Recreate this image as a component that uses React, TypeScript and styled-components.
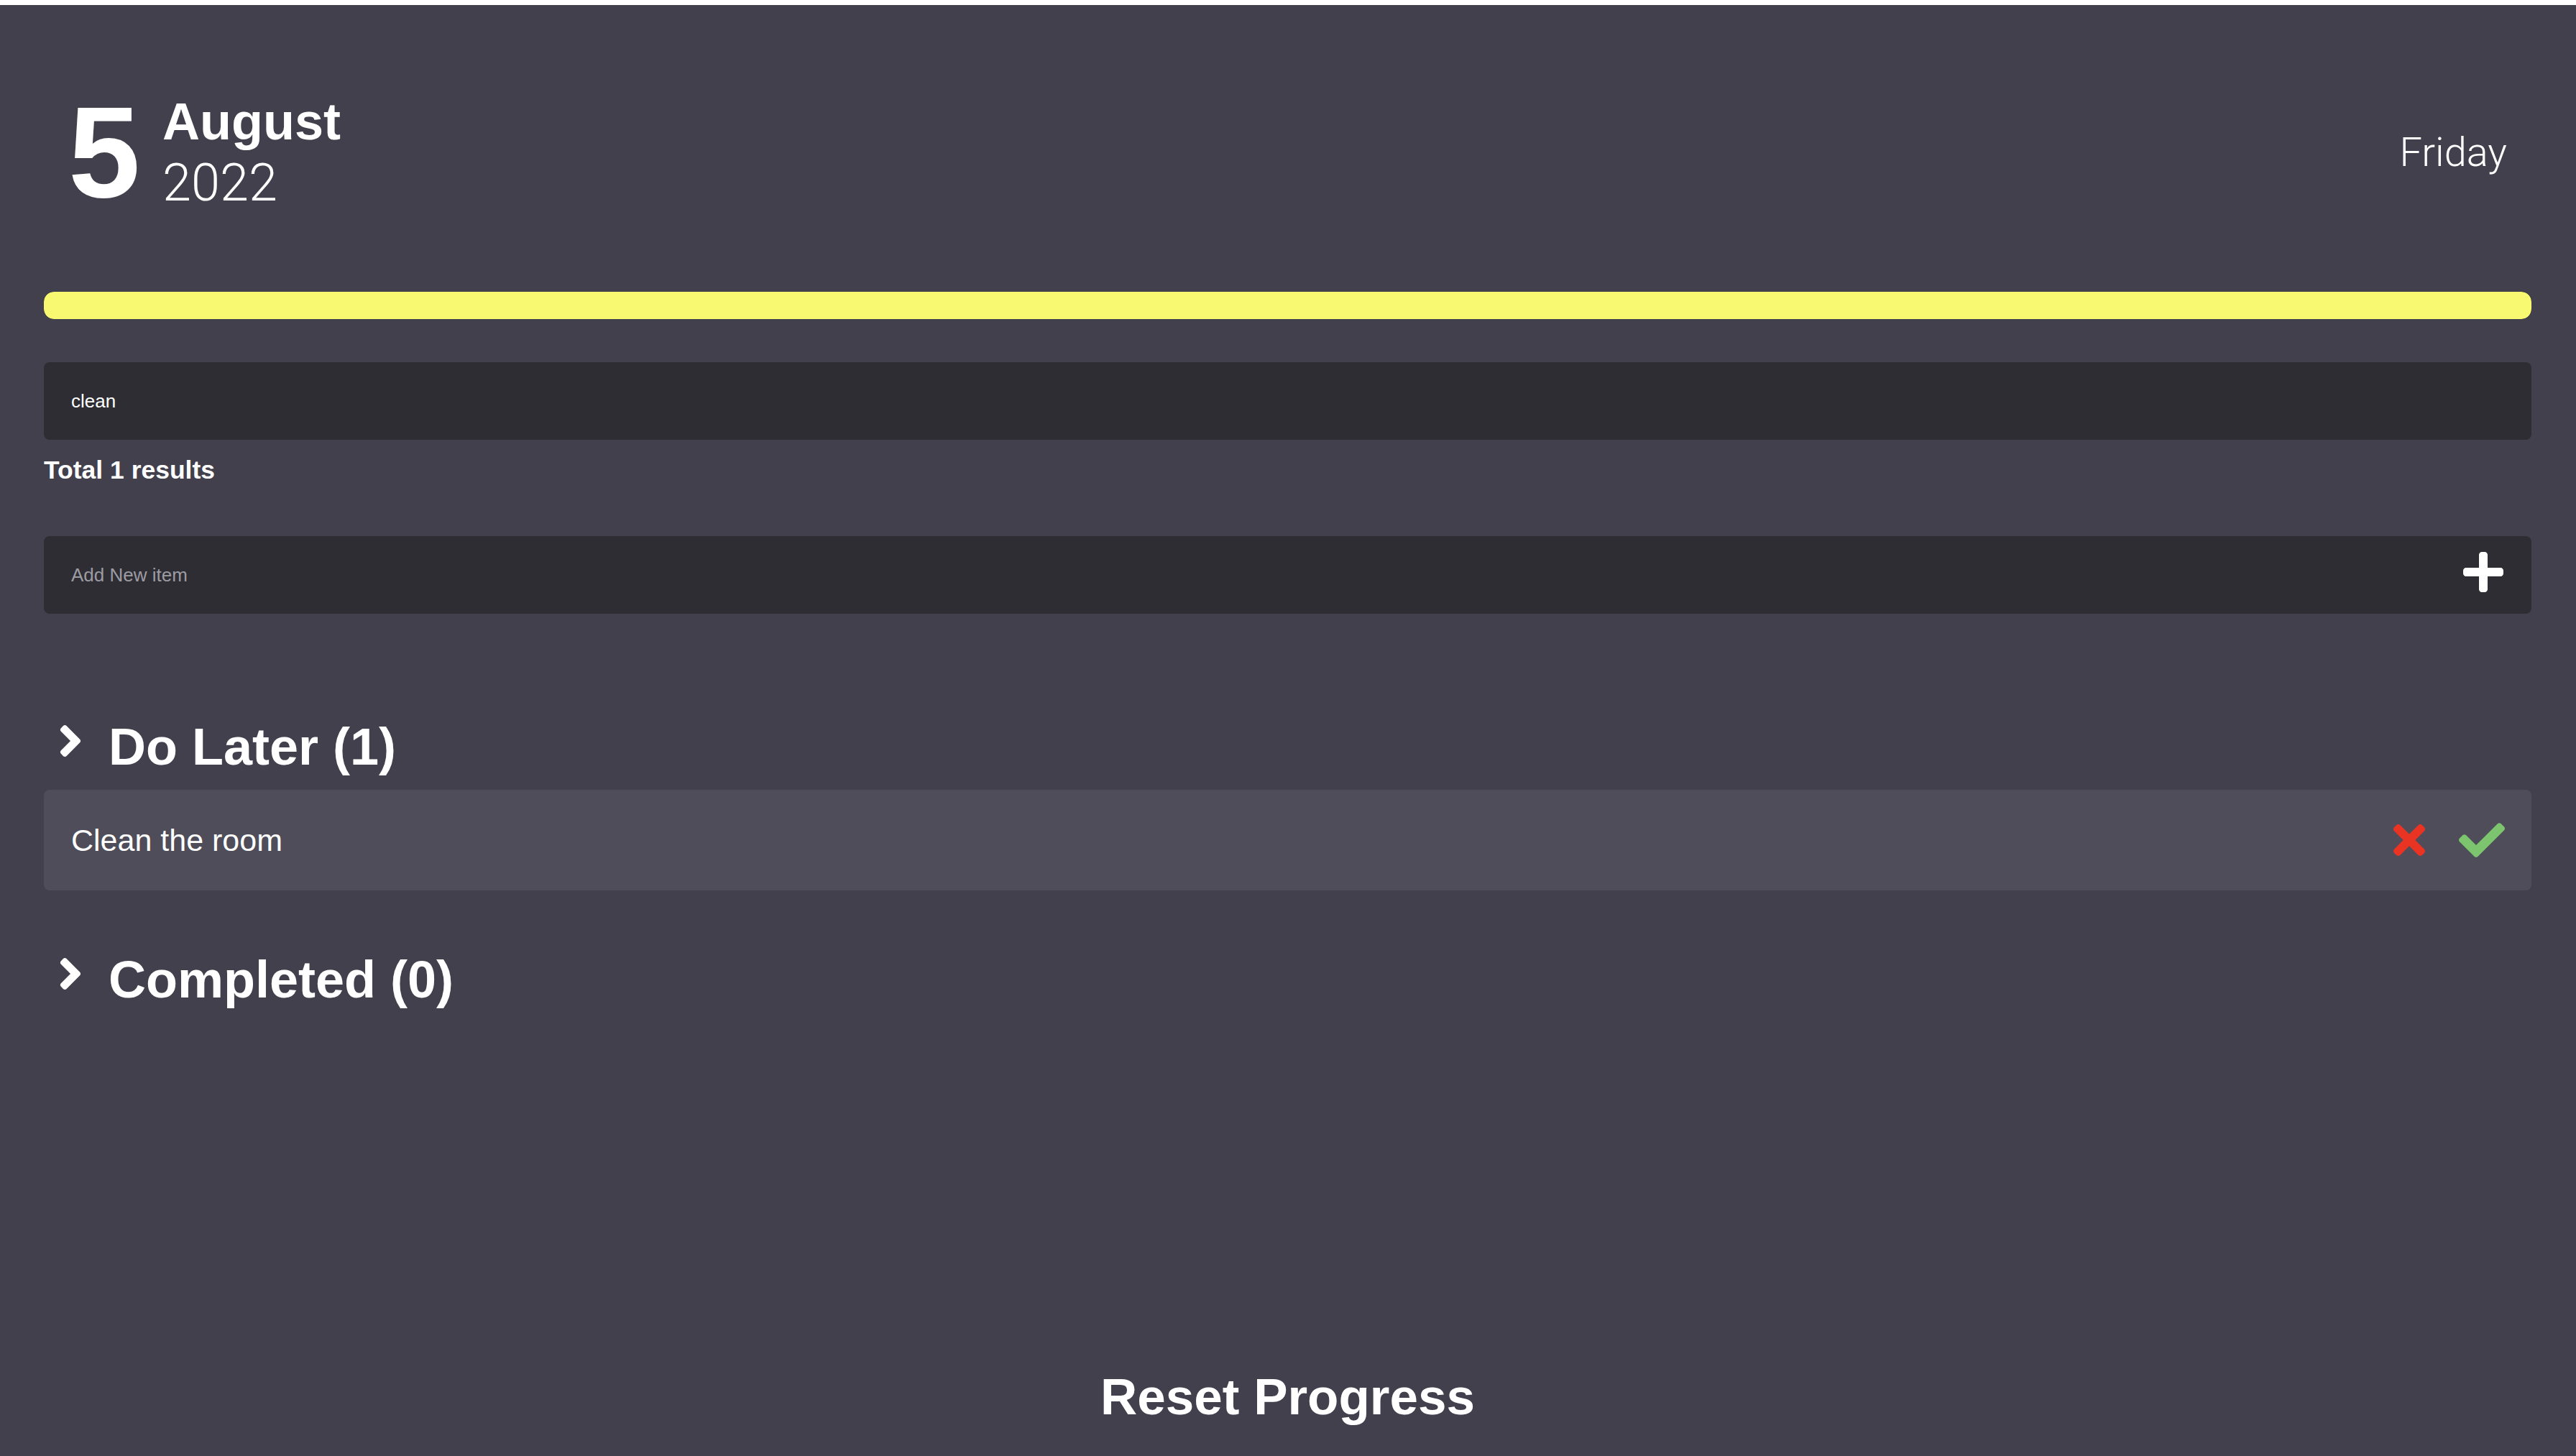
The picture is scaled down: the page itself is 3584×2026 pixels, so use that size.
import React from "react";
import styled, { createGlobalStyle } from "styled-components";
import { FaAngleRight, FaPlus, FaTimes, FaCheck } from "react-icons/fa";

const GlobalStyle = createGlobalStyle`
  html, body {
    margin: 0;
    padding: 0;
    background: #ffffff;
  }
  body {
    font-family: "Liberation Sans", Arial, Helvetica, sans-serif;
  }
  *, *::before, *::after {
    box-sizing: border-box;
  }
`;

const Page = styled.div`
  margin-top: 7px;
  min-height: calc(100vh - 7px);
  background: #41404c;
  color: #ffffff;
  display: flex;
  flex-direction: column;
  padding: 115px 62px 41px 61px;
`;

const Header = styled.header`
  display: flex;
  align-items: center;
  justify-content: space-between;
  height: 180px;
  padding: 0 34px 0 34px;
`;

const DateGroup = styled.div`
  display: flex;
  align-items: center;
  gap: 31px;
`;

const DayNumber = styled.div`
  font-size: 180px;
  font-weight: 700;
  line-height: 1;
`;

const MonthYear = styled.div`
  display: flex;
  flex-direction: column;
  font-size: 72px;
  line-height: 86px;
`;

const Month = styled.span`
  font-weight: 700;
`;

const LightText = styled.span`
  font-family: Roboto, Inter, "Liberation Sans", sans-serif;
  font-weight: 300;
`;

const Weekday = styled(LightText)`
  font-size: 56px;
  line-height: 1;
`;

const ProgressTrack = styled.div`
  margin-top: 104px;
  height: 38px;
  border-radius: 14px;
  background: #2e2d34;
  overflow: hidden;
`;

const ProgressFill = styled.div`
  height: 100%;
  border-radius: 14px;
  background: #f9f871;
`;

const Field = styled.div<{ $gap: number }>`
  margin-top: ${(p) => p.$gap}px;
  height: 108px;
  display: flex;
  align-items: center;
  background: #2e2d34;
  border-radius: 8px;
  padding: 0 35px 0 38px;
`;

const TextInput = styled.input`
  flex: 1;
  min-width: 0;
  height: 100%;
  border: none;
  outline: none;
  background: transparent;
  color: #ffffff;
  font-family: "Liberation Sans", Arial, sans-serif;
  font-size: 26px;
  padding: 0;

  &::placeholder {
    color: #9d9ca3;
  }
`;

const IconButton = styled.button<{ $color?: string }>`
  display: flex;
  align-items: center;
  justify-content: center;
  padding: 0;
  border: none;
  background: transparent;
  color: ${(p) => p.$color ?? "#ffffff"};
  cursor: pointer;

  svg {
    display: block;
  }
`;

const AddButton = styled(IconButton)`
  margin-bottom: 8px;
`;

const ResultCount = styled.div`
  margin-top: 22px;
  font-size: 35.5px;
  font-weight: 700;
  line-height: 40px;
`;

const Section = styled.section<{ $gap: number }>`
  margin-top: ${(p) => p.$gap}px;
  display: flex;
  flex-direction: column;
`;

const SectionHeader = styled.div`
  display: flex;
  align-items: flex-start;
  gap: 18px;
  padding-left: 2px;
  cursor: pointer;

  svg {
    display: block;
    margin-top: -2px;
    flex-shrink: 0;
  }
`;

const SectionTitle = styled.h2`
  margin: 0;
  font-size: 72px;
  font-weight: 700;
  line-height: 83px;
`;

const TaskRow = styled.div`
  margin-top: 18px;
  height: 140px;
  display: flex;
  align-items: center;
  justify-content: space-between;
  background: #4e4d59;
  border-radius: 8px;
  padding: 0 37px 0 38px;
`;

const TaskText = styled.span`
  font-size: 43px;
`;

const Actions = styled.div`
  display: flex;
  align-items: center;
  gap: 37px;
`;

const Footer = styled.footer`
  margin-top: auto;
  display: flex;
  justify-content: center;
`;

const ResetButton = styled.button`
  border: none;
  background: transparent;
  color: #ffffff;
  padding: 0;
  font-family: "Liberation Sans", Arial, sans-serif;
  font-size: 71px;
  font-weight: 700;
  line-height: 83px;
  cursor: pointer;
`;

const tasks = [{ id: 1, title: "Clean the room" }];

export default function App() {
  const progress = 100;
  return (
    <>
      <GlobalStyle />
      <Page>
        <Header>
          <DateGroup>
            <DayNumber>5</DayNumber>
            <MonthYear>
              <Month>August</Month>
              <LightText>2022</LightText>
            </MonthYear>
          </DateGroup>
          <Weekday>Friday</Weekday>
        </Header>

        <ProgressTrack>
          <ProgressFill style={{ width: `${progress}%` }} />
        </ProgressTrack>

        <Field $gap={60}>
          <TextInput defaultValue="clean" />
        </Field>
        <ResultCount>Total 1 results</ResultCount>

        <Field $gap={72}>
          <TextInput placeholder="Add New item" />
          <AddButton aria-label="Add">
            <FaPlus size={64} />
          </AddButton>
        </Field>

        <Section $gap={144}>
          <SectionHeader>
            <FaAngleRight size={70} />
            <SectionTitle>Do Later ({tasks.length})</SectionTitle>
          </SectionHeader>
          {tasks.map((t) => (
            <TaskRow key={t.id}>
              <TaskText>{t.title}</TaskText>
              <Actions>
                <IconButton $color="#e93323" aria-label="Delete">
                  <FaTimes size={64} />
                </IconButton>
                <IconButton $color="#7cc46d" aria-label="Complete">
                  <FaCheck size={64} />
                </IconButton>
              </Actions>
            </TaskRow>
          ))}
        </Section>

        <Section $gap={83}>
          <SectionHeader>
            <FaAngleRight size={70} />
            <SectionTitle>Completed (0)</SectionTitle>
          </SectionHeader>
        </Section>

        <Footer>
          <ResetButton>Reset Progress</ResetButton>
        </Footer>
      </Page>
    </>
  );
}
